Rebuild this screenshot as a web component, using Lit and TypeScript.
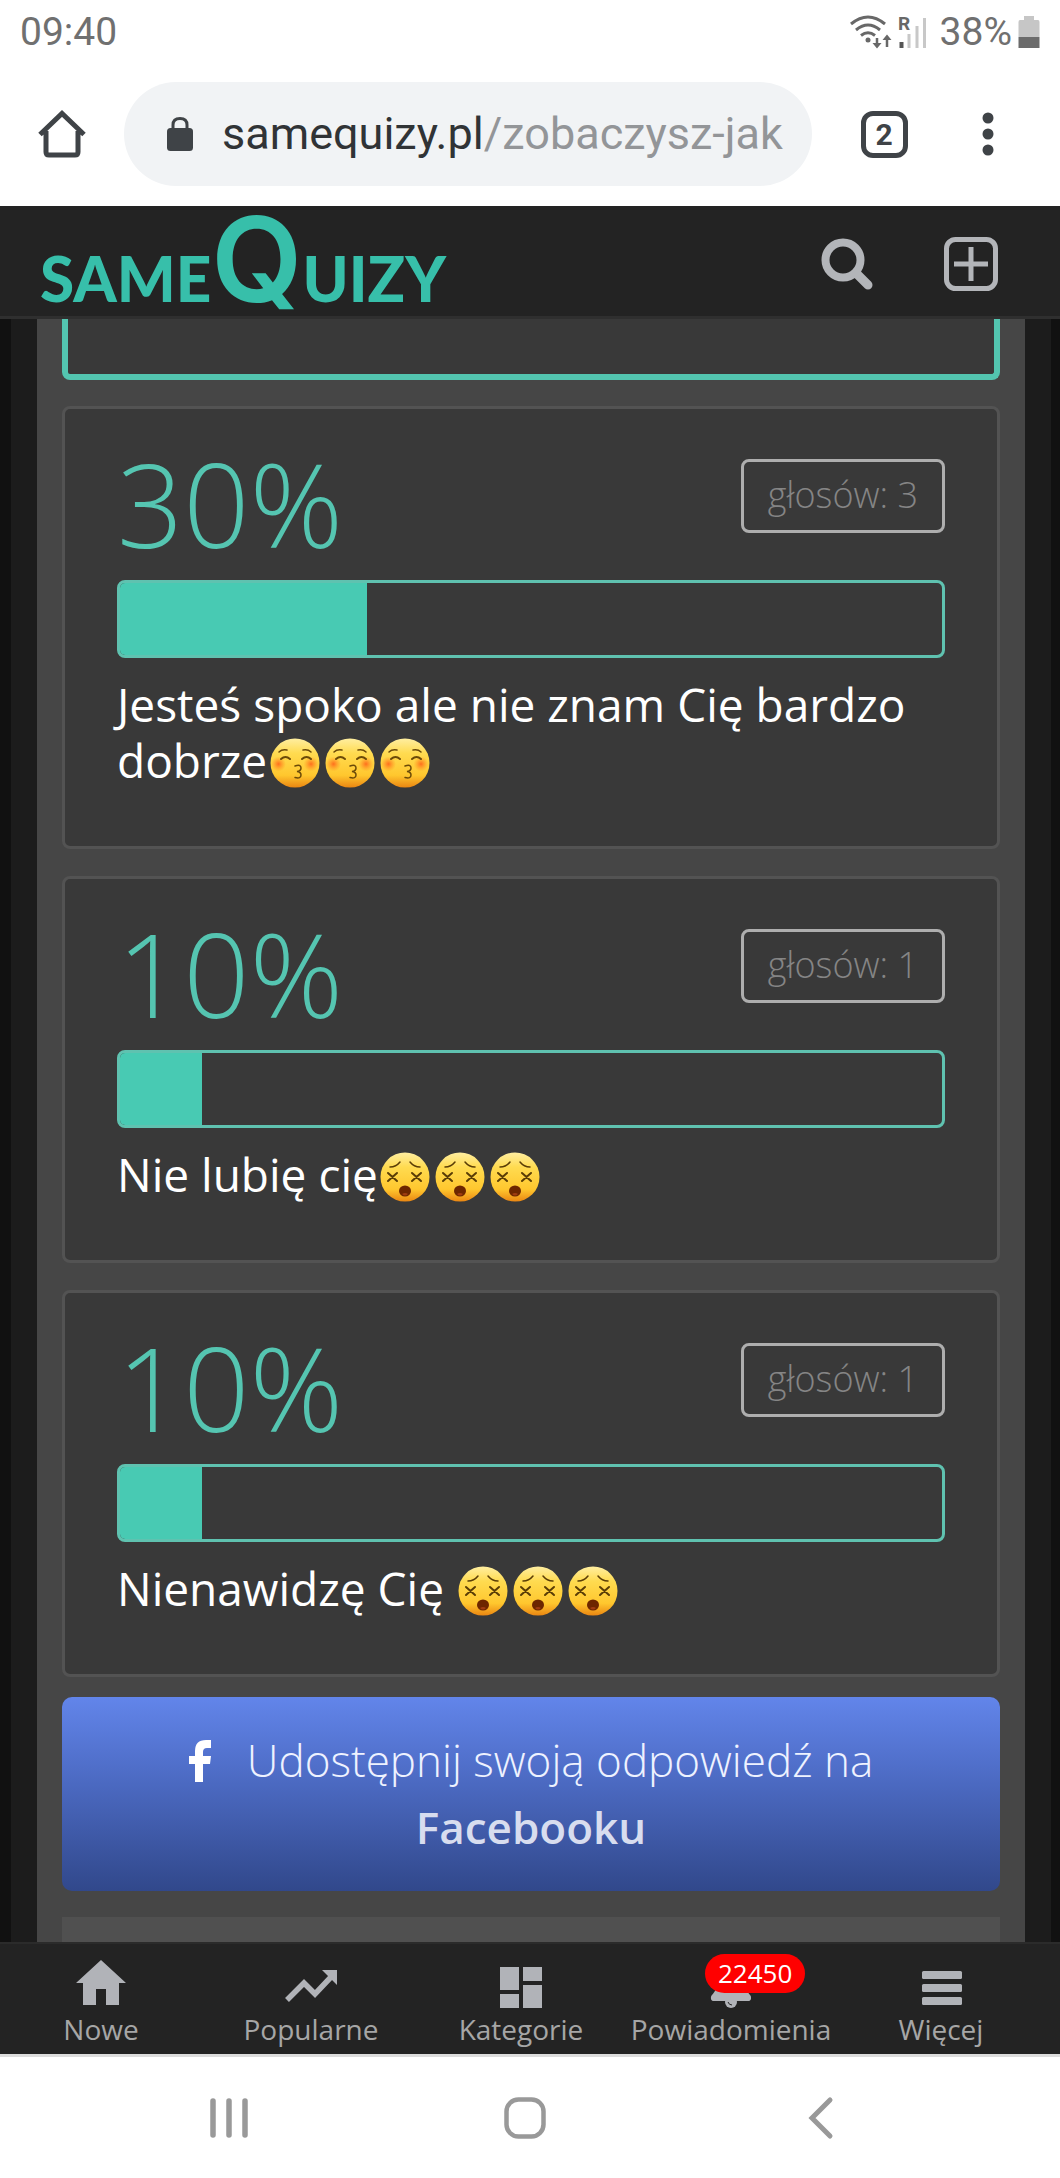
import { LitElement, html, css, svg, nothing } from "lit";
import { customElement, property } from "lit/decorators.js";
import { repeat } from "lit/directives/repeat.js";

type Mood = "kiss" | "dizzy";

interface Result {
  id: number;
  percent: number;
  votes: number;
  text: string;
  mood: Mood;
}

interface Tab {
  label: string;
  icon: unknown;
  badge?: number;
}

const RESULTS: Result[] = [
  { id: 1, percent: 30, votes: 3, text: "Jesteś spoko ale nie znam Cię bardzo dobrze", mood: "kiss" },
  { id: 2, percent: 10, votes: 1, text: "Nie lubię cię", mood: "dizzy" },
  { id: 3, percent: 10, votes: 1, text: "Nienawidzę Cię ", mood: "dizzy" },
];

const TABS: Tab[] = [
  { label: "Nowe", icon: svg`<path d="M27 4 52 27H45V49H32V33H22V49H9V27H2Z" fill="currentColor"/>` },
  {
    label: "Popularne",
    icon: svg`<path d="M3 44 20 27 31 38 47 21" fill="none" stroke="currentColor" stroke-width="5.5"/><path d="M38 14H53V29Z" fill="currentColor"/>`,
  },
  {
    label: "Kategorie",
    icon: svg`<path d="M6 11H25V34H6ZM29 11H48V25H29ZM6 38H25V52H6ZM29 29H48V52H29Z" fill="currentColor"/>`,
  },
  {
    label: "Powiadomienia",
    icon: svg`<path d="M27 8C17 8 14 15 14 22 14 31 12 34 8 39 6 41 7 45 9 45H45C47 45 48 41 46 39 42 34 40 31 40 22 40 15 37 8 27 8Z" fill="currentColor"/><circle cx="27" cy="46" r="6" fill="currentColor"/><path d="M24 46Q25 49 28 49" fill="none" stroke="#232323" stroke-width="1"/>`,
    badge: 22450,
  },
  {
    label: "Więcej",
    icon: svg`<g fill="currentColor"><rect x="8" y="15" width="40" height="8" rx="1.5"/><rect x="8" y="28" width="40" height="8" rx="1.5"/><rect x="8" y="41" width="40" height="8" rx="1.5"/></g>`,
  },
];

@customElement("mood-face")
export class MoodFace extends LitElement {
  @property() mood: Mood = "kiss";

  static styles = css`
    :host { display: inline-block; width: 55px; height: 50px; vertical-align: -10px; }
    svg { display: block; margin: 0 auto; width: 50px; height: 50px; }
  `;

  render() {
    return html`<svg viewBox="0 0 50 50" aria-hidden="true">
      <defs>
        <linearGradient id="skin" x1="0" y1="0" x2="0" y2="1">
          <stop offset="0" stop-color="#ffeea0" />
          <stop offset=".3" stop-color="#ffdb50" />
          <stop offset=".75" stop-color="#ffc72e" />
          <stop offset="1" stop-color="#ea8612" />
        </linearGradient>
        <radialGradient id="blush">
          <stop offset="0" stop-color="#ff6a1c" stop-opacity=".95" />
          <stop offset="1" stop-color="#ff8a1c" stop-opacity="0" />
        </radialGradient>
      </defs>
      <circle cx="25" cy="25" r="24.5" fill="url(#skin)" />
      ${this.mood === "kiss"
        ? svg`<circle cx="8.5" cy="26" r="7.5" fill="url(#blush)"/><circle cx="41" cy="26" r="7.5" fill="url(#blush)"/>
          <g fill="none" stroke="#6b4a08" stroke-width="1.5" stroke-linecap="round">
            <path d="M9 14Q12 11 17 12M33 12Q38 11 41 14"/>
            <path d="M11 21Q15.500 17 20 21M32 21Q36.500 17 41 21" stroke-width="2"/>
            <path d="M25 28Q31 26 31 30 31 33 27 33.500 31 34 31 37 31 41 25 39.500"/>
          </g>`
        : svg`<g fill="none" stroke="#5a3d06" stroke-width="2" stroke-linecap="round">
            <path d="M10 15Q16 15 20 10M30 10Q34 15 40 15" stroke-width="1.500"/>
            <path d="M8 21 17 29M17 21 8 29M32 21 41 29M41 21 32 29"/>
          </g><ellipse cx="25" cy="39" rx="6" ry="5.500" fill="#6d2600"/><path d="M22 42Q25 40 28 42 25 45 22 42Z" fill="#a03c12"/>`}
    </svg>`;
  }
}

@customElement("result-card")
export class ResultCard extends LitElement {
  @property({ attribute: false }) result!: Result;

  static styles = css`
    :host { display: block; }
    .card {
      box-sizing: border-box;
      padding: 50px 52px 56px;
      border: 3px solid #535353;
      border-radius: 8px;
      background: #393939;
    }
    .head { display: flex; justify-content: space-between; align-items: flex-start; height: 121px; }
    .percent { font-size: 116px; font-weight: 300; line-height: 88px; color: #55c5b1; }
    .votes {
      box-sizing: border-box;
      height: 74px;
      padding: 0 24px;
      border: 3px solid #aeaeae;
      border-radius: 8px;
      font-size: 36px;
      font-weight: 300;
      line-height: 66px;
      color: #858585;
    }
    .track {
      box-sizing: border-box;
      height: 78px;
      border: 3px solid #5fc2b0;
      border-radius: 8px;
      background: #393939;
      overflow: hidden;
    }
    .fill { height: 100%; background: #48cab3; }
    .text { margin: 18px 0 0; padding-bottom: 2px; font-size: 46px; line-height: 56px; color: #fff; }
  `;

  render() {
    const { percent, votes, text, mood } = this.result;
    return html`<article class="card">
      <div class="head">
        <div class="percent">${percent}%</div>
        <div class="votes">głosów: ${votes}</div>
      </div>
      <div class="track" role="progressbar" aria-valuenow=${percent} aria-valuemin="0" aria-valuemax="100">
        <div class="fill" style="width:${percent}%"></div>
      </div>
      <p class="text">${text}${[0, 1, 2].map(() => html`<mood-face mood=${mood}></mood-face>`)}</p>
    </article>`;
  }
}

@customElement("app-root")
export class AppRoot extends LitElement {
  static styles = css`
    :host {
      display: flex;
      flex-direction: column;
      min-height: 100vh;
      background: #fff;
      font-family: "Open Sans", "Noto Sans", sans-serif;
    }
    button { margin: 0; padding: 0; border: 0; background: none; color: inherit; font: inherit; cursor: pointer; }
    svg { display: block; }
    a { color: inherit; text-decoration: none; }

    .status {
      display: flex;
      align-items: center;
      height: 64px;
      padding: 0 20px;
      font: 39px/64px Roboto, sans-serif;
      color: #707070;
    }
    .status-icons { display: flex; align-items: center; margin-left: auto; }
    .signal { overflow: visible; }
    .level { margin: 0 6px 0 14px; }

    .toolbar { display: flex; align-items: center; height: 104px; padding: 18px 0 20px; color: #3f4347; }
    .home { width: 124px; display: flex; justify-content: center; }
    .address {
      box-sizing: border-box;
      flex: 1;
      min-width: 0;
      height: 104px;
      display: flex;
      align-items: center;
      padding: 0 20px 0 40px;
      border-radius: 52px;
      background: #f1f3f5;
      font: 45px/106px Roboto, sans-serif;
    }
    .url { flex: 1; margin-left: 26px; overflow: hidden; white-space: nowrap; color: #303336; }
    .path { color: #939598; }
    .tabs { width: 144px; display: flex; justify-content: center; }
    .count {
      box-sizing: border-box;
      width: 47px;
      height: 47px;
      border: 5px solid currentColor;
      border-radius: 12px;
      font: 700 30px/37px Roboto, sans-serif;
      text-align: center;
    }
    .more { width: 64px; margin-right: 40px; display: flex; justify-content: center; }

    .header {
      box-sizing: border-box;
      display: flex;
      align-items: center;
      height: 113px;
      padding: 6px 62px 0 40px;
      border-bottom: 3px solid #2f2f2f;
      background: #232323;
      color: #b3b5b9;
    }
    .logo {
      display: flex;
      align-items: baseline;
      margin-right: auto;
      padding-top: 8px;
      font: 900 62px/104px Lato, sans-serif;
      color: #37bfaa;
    }
    .logo-q { font-family: Inter, Lato, sans-serif; font-size: 118px; font-weight: 600; }
    .search { margin-right: 71px; }

    .page { display: flex; flex-direction: column; padding: 0 9px 0 11px; background: #111; }
    .gutter { padding: 0 26px; background: #1c1c1c; }
    .content {
      display: flex;
      flex-direction: column;
      padding: 0 25px;
      background: #464646;
    }
    .chosen {
      box-sizing: border-box;
      height: 61px;
      margin-bottom: 26px;
      border: 6px solid #53c5b0;
      border-top: 0;
      border-radius: 0 0 8px 8px;
      background: #393939;
    }
    .results { display: flex; flex-direction: column; gap: 27px; }
    .share {
      display: block;
      margin-top: 20px;
      padding: 30px 80px;
      border-radius: 10px;
      background: linear-gradient(#6285ea, #4b69c1 45%, #31488b);
      font-size: 44px;
      font-weight: 300;
      line-height: 67px;
      text-align: center;
      color: #eef2ff;
    }
    .share svg { display: inline-block; vertical-align: -5px; margin-right: 36px; }
    .share strong { font-weight: 600; color: #d8ddef; }
    .next { height: 25px; margin-top: 26px; background: #505050; }

    .nav {
      display: grid;
      grid-template-columns: repeat(5, minmax(0, 1fr));
      column-gap: 8px;
      height: 110px;
      padding: 0 18px 0 0;
      border-top: 2px solid #2b2b2b;
      border-bottom: 3px solid #dcdcdc;
      background: #232323;
      color: #b1b3b8;
    }
    .tab { display: flex; flex-direction: column; align-items: center; padding-top: 12px; }
    .tab-icon { position: relative; }
    .tab-label { font-size: 28px; line-height: 38px; color: #a6a6a6; }
    .badge {
      position: absolute;
      left: 1px;
      top: -2px;
      padding: 0 13px;
      border-radius: 20px;
      background: #f00;
      color: #fff;
      font-size: 26px;
      line-height: 39px;
    }

    .system { display: flex; justify-content: space-around; align-items: center; flex: 1; min-height: 120px; padding: 0 91px 0 81px; }
  `;

  private browserBars() {
    return html`<div class="status">
        <span>09:40</span>
        <div class="status-icons">
          <svg class="signal" width="76" height="36" viewBox="0 0 76 36" aria-hidden="true">
            <g fill="none" stroke="#686868" stroke-width="3">
              <path d="M1 10Q18-4 35 10M6 16Q18 6 30 16M11 21.500Q18 16 25 21.500" />
            </g>
            <circle cx="18" cy="26" r="2.500" fill="#686868" />
            <path d="M27 24V31M37 33V25" stroke="#686868" stroke-width="2.500" />
            <path d="M22.500 29H31.500L27 34.500ZM32.500 26H41.500L37 20.500Z" fill="#686868" />
            <text x="48" y="16" font-family="Roboto" font-weight="700" font-size="19" fill="#686868">R</text>
            <path d="M51.500 28V34" stroke="#555" stroke-width="4" />
            <path d="M59 20V34M67 12V34M74.500 4V34" stroke="#c8c8c8" stroke-width="3" />
          </svg>
          <span class="level">38%</span>
          <svg width="22" height="34" viewBox="0 0 22 34" aria-hidden="true">
            <path d="M6 1H16V5H20Q21.500 5 21.500 7V22H.5V7Q.5 5 2 5H6Z" fill="#c6c6c6" />
            <path d="M.5 22H21.500V33H.5Z" fill="#6b6b6b" />
          </svg>
        </div>
      </div>
      <div class="toolbar">
        <button class="home" aria-label="Strona główna">
          <svg width="50" height="50" viewBox="0 0 50 50" fill="none" stroke="currentColor" stroke-width="5">
            <path d="M3 25.500 25 4.500 47 25.500M9 22V43Q9 46 12 46H38Q41 46 41 43V22" />
          </svg>
        </button>
        <div class="address">
          <svg width="32" height="36" viewBox="0 0 32 36" aria-hidden="true">
            <rect x="3" y="12" width="26" height="23" rx="3.500" fill="currentColor" />
            <path d="M9 14V9Q9 2.500 16 2.500T23 9V14" fill="none" stroke="currentColor" stroke-width="3" />
          </svg>
          <div class="url">samequizy.pl<span class="path">/zobaczysz-jak</span></div>
        </div>
        <button class="tabs" aria-label="Karty"><span class="count">2</span></button>
        <button class="more" aria-label="Więcej opcji">
          <svg width="12" height="44" viewBox="0 0 12 44" fill="currentColor">
            <circle cx="6" cy="6" r="5.500" /><circle cx="6" cy="22" r="5.500" /><circle cx="6" cy="38" r="5.500" />
          </svg>
        </button>
      </div>`;
  }

  render() {
    return html`
      ${this.browserBars()}
      <header class="header">
        <a class="logo" href="#"><span>SAME</span><span class="logo-q">Q</span><span>UIZY</span></a>
        <button class="search" aria-label="Szukaj">
          <svg width="52" height="52" viewBox="0 0 52 52" fill="none" stroke="currentColor">
            <circle cx="22" cy="22" r="17.500" stroke-width="8" />
            <path d="M36 36 47 47" stroke-width="9" stroke-linecap="round" />
          </svg>
        </button>
        <button aria-label="Dodaj">
          <svg width="54" height="54" viewBox="0 0 54 54" fill="none" stroke="currentColor">
            <rect x="2.500" y="2.500" width="49" height="49" rx="9" stroke-width="5" />
            <path d="M27 10V44M10 27H44" stroke-width="5" />
          </svg>
        </button>
      </header>
      <main class="page">
        <div class="gutter">
          <div class="content">
            <div class="chosen"></div>
            <div class="results">
              ${repeat(RESULTS, (r) => r.id, (r) => html`<result-card .result=${r}></result-card>`)}
            </div>
            <a class="share" href="#">
              <svg width="22" height="42" viewBox="0 0 22 42" aria-hidden="true">
                <path d="M6 42V24H0V16H6V11Q6 0 17 0H22V8H18Q14 8 14 12V16H22L21 24H14V42Z" fill="#fff" /></svg
              >Udostępnij swoją odpowiedź na <strong>Facebooku</strong>
            </a>
            <div class="next"></div>
          </div>
        </div>
      </main>
      <nav class="nav">
        ${TABS.map(
          (t) => html`<a class="tab" href="#">
            <span class="tab-icon">
              <svg width="54" height="54" viewBox="0 0 54 54" aria-hidden="true">${t.icon}</svg>
              ${t.badge ? html`<span class="badge">${t.badge}</span>` : nothing}
            </span>
            <span class="tab-label">${t.label}</span>
          </a>`
        )}
      </nav>
      <div class="system">
        <button aria-label="Ostatnie">
          <svg width="44" height="44" viewBox="0 0 44 44" stroke="#999" stroke-width="5.500" stroke-linecap="round">
            <path d="M6 5V39M22 5V39M38 5V39" />
          </svg>
        </button>
        <button aria-label="Ekran główny">
          <svg width="44" height="44" viewBox="0 0 44 44" fill="none" stroke="#999" stroke-width="4.500">
            <rect x="3.500" y="3.500" width="37" height="37" rx="12" />
          </svg>
        </button>
        <button aria-label="Wstecz">
          <svg width="44" height="44" viewBox="0 0 44 44" fill="none" stroke="#999" stroke-width="5" stroke-linecap="round">
            <path d="M31 4 13 22 31 40" />
          </svg>
        </button>
      </div>
    `;
  }
}
